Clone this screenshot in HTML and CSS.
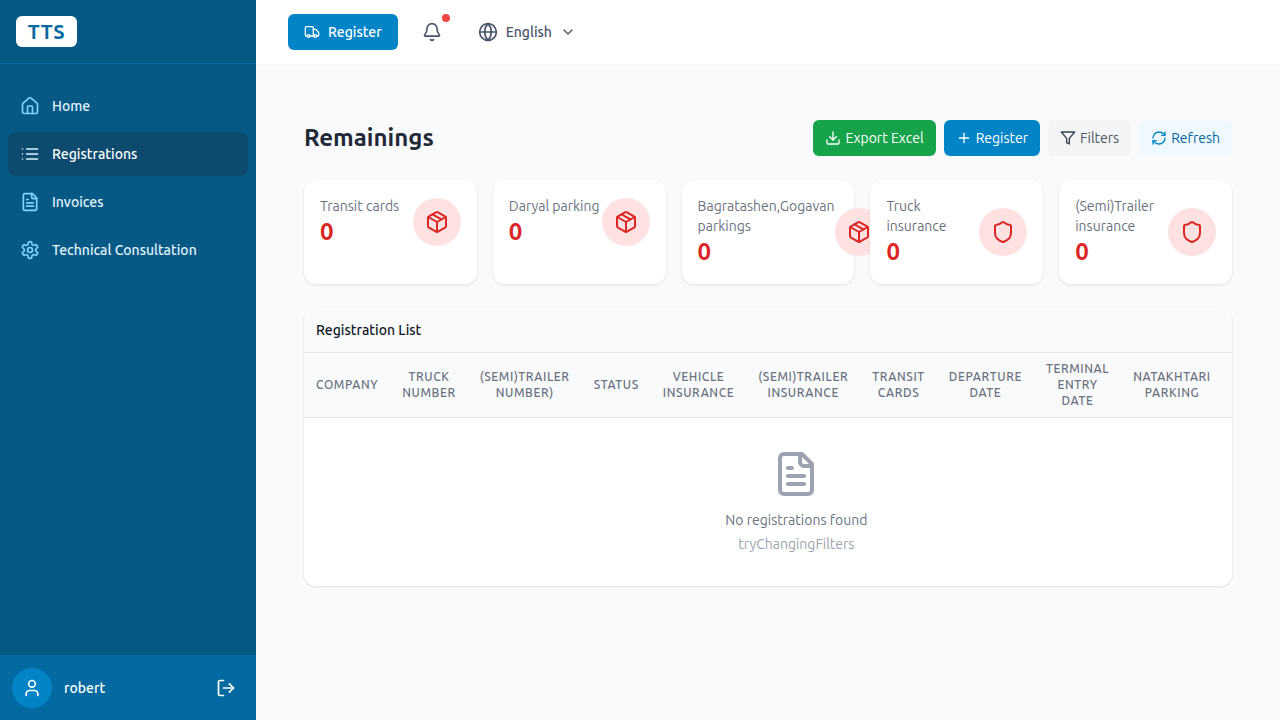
FILE: index.html
```html
<!DOCTYPE html>
<html lang="en">
<head>
    <meta charset="UTF-8">
    <meta name="viewport" content="width=device-width, initial-scale=1.0">
    <title>Remainings</title>
    <link rel="stylesheet" href="styles.css">
</head>
<body>
    <aside class="sidebar">
        <div class="brand"><span class="logo">TTS</span></div>
        <nav class="nav">
            <a class="nav-item">
                <svg class="icon icon-20" viewBox="0 0 24 24"><path d="M15 21v-8a1 1 0 0 0-1-1h-4a1 1 0 0 0-1 1v8"/><path d="M3 10a2 2 0 0 1 .709-1.528l7-5.999a2 2 0 0 1 2.582 0l7 5.999A2 2 0 0 1 21 10v9a2 2 0 0 1-2 2H5a2 2 0 0 1-2-2z"/></svg>
                Home
            </a>
            <a class="nav-item active">
                <svg class="icon icon-20" viewBox="0 0 24 24"><path d="M3 12h.01"/><path d="M3 18h.01"/><path d="M3 6h.01"/><path d="M8 12h13"/><path d="M8 18h13"/><path d="M8 6h13"/></svg>
                Registrations
            </a>
            <a class="nav-item">
                <svg class="icon icon-20" viewBox="0 0 24 24"><path d="M15 2H6a2 2 0 0 0-2 2v16a2 2 0 0 0 2 2h12a2 2 0 0 0 2-2V7Z"/><path d="M14 2v4a2 2 0 0 0 2 2h4"/><path d="M10 9H8"/><path d="M16 13H8"/><path d="M16 17H8"/></svg>
                Invoices
            </a>
            <a class="nav-item">
                <svg class="icon icon-20" viewBox="0 0 24 24"><path d="M12.22 2h-.44a2 2 0 0 0-2 2v.18a2 2 0 0 1-1 1.73l-.43.25a2 2 0 0 1-2 0l-.15-.08a2 2 0 0 0-2.73.73l-.22.38a2 2 0 0 0 .73 2.73l.15.1a2 2 0 0 1 1 1.72v.51a2 2 0 0 1-1 1.74l-.15.09a2 2 0 0 0-.73 2.73l.22.38a2 2 0 0 0 2.73.73l.15-.08a2 2 0 0 1 2 0l.43.25a2 2 0 0 1 1 1.73V20a2 2 0 0 0 2 2h.44a2 2 0 0 0 2-2v-.18a2 2 0 0 1 1-1.73l.43-.25a2 2 0 0 1 2 0l.15.08a2 2 0 0 0 2.73-.73l.22-.39a2 2 0 0 0-.73-2.73l-.15-.08a2 2 0 0 1-1-1.74v-.5a2 2 0 0 1 1-1.74l.15-.09a2 2 0 0 0 .73-2.73l-.22-.38a2 2 0 0 0-2.73-.73l-.15.08a2 2 0 0 1-2 0l-.43-.25a2 2 0 0 1-1-1.73V4a2 2 0 0 0-2-2z"/><circle cx="12" cy="12" r="3"/></svg>
                Technical Consultation
            </a>
        </nav>
        <div class="user-bar">
            <span class="avatar">
                <svg class="icon icon-20" viewBox="0 0 24 24"><path d="M19 21v-2a4 4 0 0 0-4-4H9a4 4 0 0 0-4 4v2"/><circle cx="12" cy="7" r="4"/></svg>
            </span>
            <span class="user-name">robert</span>
            <svg class="icon icon-20 logout" viewBox="0 0 24 24"><path d="M9 21H5a2 2 0 0 1-2-2V5a2 2 0 0 1 2-2h4"/><polyline points="16 17 21 12 16 7"/><line x1="21" y1="12" x2="9" y2="12"/></svg>
        </div>
    </aside>

    <div class="content">
        <header class="topbar">
            <button class="btn btn-blue top-register">
                <svg class="icon icon-16" viewBox="0 0 24 24"><path d="M14 18V6a2 2 0 0 0-2-2H4a2 2 0 0 0-2 2v11a1 1 0 0 0 1 1h2"/><path d="M15 18H9"/><path d="M19 18h2a1 1 0 0 0 1-1v-3.65a1 1 0 0 0-.22-.624l-3.48-4.35A1 1 0 0 0 17.52 8H14"/><circle cx="17" cy="18" r="2"/><circle cx="7" cy="18" r="2"/></svg>
                Register
            </button>
            <span class="bell">
                <svg class="icon icon-20" viewBox="0 0 24 24"><path d="M10.268 21a2 2 0 0 0 3.464 0"/><path d="M3.262 15.326A1 1 0 0 0 4 17h16a1 1 0 0 0 .74-1.673C19.41 13.956 18 12.499 18 8A6 6 0 0 0 6 8c0 4.499-1.411 5.956-2.738 7.326"/></svg>
                <span class="bell-dot"></span>
            </span>
            <span class="lang">
                <svg class="icon icon-20" viewBox="0 0 24 24"><circle cx="12" cy="12" r="10"/><path d="M12 2a14.5 14.5 0 0 0 0 20 14.5 14.5 0 0 0 0-20"/><path d="M2 12h20"/></svg>
                English
                <svg class="icon icon-16 chevron" viewBox="0 0 24 24"><path d="m6 9 6 6 6-6"/></svg>
            </span>
        </header>

        <main class="main">
            <div class="page-head">
                <h1>Remainings</h1>
                <div class="actions">
                    <button class="btn btn-green">
                        <svg class="icon icon-16" viewBox="0 0 24 24"><path d="M21 15v4a2 2 0 0 1-2 2H5a2 2 0 0 1-2-2v-4"/><polyline points="7 10 12 15 17 10"/><line x1="12" y1="15" x2="12" y2="3"/></svg>
                        Export Excel
                    </button>
                    <button class="btn btn-blue">
                        <svg class="icon icon-16" viewBox="0 0 24 24"><path d="M5 12h14"/><path d="M12 5v14"/></svg>
                        Register
                    </button>
                    <button class="btn btn-gray">
                        <svg class="icon icon-16" viewBox="0 0 24 24"><polygon points="22 3 2 3 10 12.46 10 19 14 21 14 12.46 22 3"/></svg>
                        Filters
                    </button>
                    <button class="btn btn-light">
                        <svg class="icon icon-16" viewBox="0 0 24 24"><path d="M3 12a9 9 0 0 1 9-9 9.75 9.75 0 0 1 6.74 2.74L21 8"/><path d="M21 3v5h-5"/><path d="M21 12a9 9 0 0 1-9 9 9.75 9.75 0 0 1-6.74-2.74L3 16"/><path d="M8 16H3v5"/></svg>
                        Refresh
                    </button>
                </div>
            </div>

            <section class="stats">
                <div class="stat">
                    <div class="stat-row">
                        <div class="stat-text"><p class="stat-label">Transit cards</p><p class="stat-value">0</p></div>
                        <span class="stat-icon"><svg class="icon icon-24" viewBox="0 0 24 24"><path d="M11 21.73a2 2 0 0 0 2 0l7-4A2 2 0 0 0 21 16V8a2 2 0 0 0-1-1.73l-7-4a2 2 0 0 0-2 0l-7 4A2 2 0 0 0 3 8v8a2 2 0 0 0 1 1.73z"/><path d="M12 22V12"/><polyline points="3.29 7 12 12 20.71 7"/><path d="m7.5 4.27 9 5.15"/></svg></span>
                    </div>
                </div>
                <div class="stat">
                    <div class="stat-row">
                        <div class="stat-text"><p class="stat-label">Daryal parking</p><p class="stat-value">0</p></div>
                        <span class="stat-icon"><svg class="icon icon-24" viewBox="0 0 24 24"><path d="M11 21.73a2 2 0 0 0 2 0l7-4A2 2 0 0 0 21 16V8a2 2 0 0 0-1-1.73l-7-4a2 2 0 0 0-2 0l-7 4A2 2 0 0 0 3 8v8a2 2 0 0 0 1 1.73z"/><path d="M12 22V12"/><polyline points="3.29 7 12 12 20.71 7"/><path d="m7.5 4.27 9 5.15"/></svg></span>
                    </div>
                </div>
                <div class="stat">
                    <div class="stat-row">
                        <div class="stat-text"><p class="stat-label">Bagratashen,Gogavan parkings</p><p class="stat-value">0</p></div>
                        <span class="stat-icon"><svg class="icon icon-24" viewBox="0 0 24 24"><path d="M11 21.73a2 2 0 0 0 2 0l7-4A2 2 0 0 0 21 16V8a2 2 0 0 0-1-1.73l-7-4a2 2 0 0 0-2 0l-7 4A2 2 0 0 0 3 8v8a2 2 0 0 0 1 1.73z"/><path d="M12 22V12"/><polyline points="3.29 7 12 12 20.71 7"/><path d="m7.5 4.27 9 5.15"/></svg></span>
                    </div>
                </div>
                <div class="stat">
                    <div class="stat-row">
                        <div class="stat-text"><p class="stat-label">Truck insurance</p><p class="stat-value">0</p></div>
                        <span class="stat-icon"><svg class="icon icon-24" viewBox="0 0 24 24"><path d="M20 13c0 5-3.5 7.5-7.66 8.95a1 1 0 0 1-.67-.01C7.5 20.5 4 18 4 13V6a1 1 0 0 1 1-1c2 0 4.5-1.2 6.24-2.72a1.17 1.17 0 0 1 1.52 0C14.51 3.81 17 5 19 5a1 1 0 0 1 1 1z"/></svg></span>
                    </div>
                </div>
                <div class="stat">
                    <div class="stat-row">
                        <div class="stat-text"><p class="stat-label">(Semi)Trailer insurance</p><p class="stat-value">0</p></div>
                        <span class="stat-icon"><svg class="icon icon-24" viewBox="0 0 24 24"><path d="M20 13c0 5-3.5 7.5-7.66 8.95a1 1 0 0 1-.67-.01C7.5 20.5 4 18 4 13V6a1 1 0 0 1 1-1c2 0 4.5-1.2 6.24-2.72a1.17 1.17 0 0 1 1.52 0C14.51 3.81 17 5 19 5a1 1 0 0 1 1 1z"/></svg></span>
                    </div>
                </div>
            </section>

            <section class="list-card">
                <div class="list-title">Registration List</div>
                <table class="list-table">
                    <thead>
                        <tr>
                            <th class="left">Company</th>
                            <th>Truck Number</th>
                            <th>(Semi)Trailer Number)</th>
                            <th>Status</th>
                            <th>Vehicle Insurance</th>
                            <th>(Semi)Trailer Insurance</th>
                            <th>Transit Cards</th>
                            <th>Departure Date</th>
                            <th>Terminal Entry Date</th>
                            <th>Natakhtari Parking</th>
                            <th class="col-rest"></th>
                        </tr>
                    </thead>
                    <tbody>
                        <tr>
                            <td colspan="11">
                                <div class="empty">
                                    <svg class="icon empty-icon" viewBox="0 0 24 24"><path d="M15 2H6a2 2 0 0 0-2 2v16a2 2 0 0 0 2 2h12a2 2 0 0 0 2-2V7Z"/><path d="M14 2v4a2 2 0 0 0 2 2h4"/><path d="M10 9H8"/><path d="M16 13H8"/><path d="M16 17H8"/></svg>
                                    <p class="empty-title">No registrations found</p>
                                    <p class="empty-hint">tryChangingFilters</p>
                                </div>
                            </td>
                        </tr>
                    </tbody>
                </table>
            </section>
        </main>
    </div>
</body>
</html>
```

FILE: styles.css
```css
* {
    box-sizing: border-box;
}
body {
    margin: 0;
    height: 720px;
    display: flex;
    overflow: hidden;
    font-family: Ubuntu, "Noto Sans", "Open Sans", sans-serif;
    font-size: 14px;
    line-height: 20px;
    background-color: #f9fafb;
    color: #111827;
}
p, h1 {
    margin: 0;
}
.icon {
    fill: none;
    stroke: currentColor;
    stroke-width: 2;
    stroke-linecap: round;
    stroke-linejoin: round;
    flex-shrink: 0;
}
.icon-16 {
    width: 16px;
    height: 16px;
}
.icon-20 {
    width: 20px;
    height: 20px;
}
.icon-24 {
    width: 24px;
    height: 24px;
}

/* sidebar */
.sidebar {
    width: 256px;
    flex-shrink: 0;
    display: flex;
    flex-direction: column;
    background-color: #075985;
    color: #e0f2fe;
}
.brand {
    height: 64px;
    padding: 16px;
    border-bottom: 1px solid #0369a1;
}
.logo {
    display: inline-block;
    width: 61px;
    height: 31px;
    background: white;
    border-radius: 6px;
    color: #0369a1;
    font-size: 20px;
    font-weight: 700;
    line-height: 31px;
    letter-spacing: 0.5px;
    text-align: center;
}
.nav {
    flex: 1;
    padding: 20px 8px;
    display: flex;
    flex-direction: column;
    gap: 4px;
}
.nav-item {
    height: 44px;
    padding: 0 12px;
    display: flex;
    align-items: center;
    gap: 12px;
    border-radius: 8px;
    font-weight: 500;
}
.nav-item .icon {
    color: #7dd3fc;
}
.nav-item.active {
    background-color: #0c4a6e;
    color: white;
}
.nav-item.active .icon {
    color: #e0f2fe;
}
.user-bar {
    height: 65px;
    padding: 0 20px 0 12px;
    display: flex;
    align-items: center;
    gap: 12px;
    background-color: #0369a1;
    color: white;
}
.avatar {
    width: 40px;
    height: 40px;
    border-radius: 50%;
    background-color: #0284c7;
    display: flex;
    align-items: center;
    justify-content: center;
}
.user-name {
    flex: 1;
    font-weight: 500;
}

/* top bar */
.content {
    flex: 1;
    min-width: 0;
}
.topbar {
    height: 65px;
    padding: 0 32px;
    display: flex;
    align-items: center;
    background: white;
    border-bottom: 1px solid #f3f4f6;
}
.btn {
    height: 36px;
    padding: 0 12px;
    display: inline-flex;
    align-items: center;
    gap: 4px;
    border: none;
    border-radius: 6px;
    font-family: inherit;
    font-size: 14px;
    font-weight: 400;
}
.btn-blue {
    background-color: #0284c7;
    color: white;
}
.btn-green {
    background-color: #16a34a;
    color: white;
}
.btn-gray {
    background-color: #f3f4f6;
    color: #4b5563;
}
.btn-gray .icon {
    color: #374151;
}
.btn-light {
    background-color: #f0f9ff;
    color: #0369a1;
}
.btn-light .icon {
    color: #0284c7;
}
.top-register {
    padding: 0 16px;
    gap: 8px;
    font-weight: 500;
}
.bell {
    position: relative;
    margin-left: 24px;
    width: 20px;
    height: 20px;
    color: #475569;
}
.bell-dot {
    position: absolute;
    top: -8px;
    right: -8px;
    width: 8px;
    height: 8px;
    border-radius: 50%;
    background-color: #ef4444;
}
.lang {
    margin-left: 36px;
    display: flex;
    align-items: center;
    gap: 8px;
    color: #475569;
    font-weight: 500;
}

/* page */
.main {
    padding: 55px 48px;
}
.page-head {
    display: flex;
    align-items: center;
    justify-content: space-between;
}
h1 {
    font-size: 24px;
    line-height: 32px;
    font-weight: 700;
    color: #1f2937;
}
.actions {
    display: flex;
    gap: 8px;
}
.stats {
    margin-top: 24px;
    display: grid;
    grid-template-columns: repeat(5, minmax(0, 1fr));
    gap: 16px;
}
.stat {
    padding: 16px;
    background: white;
    border-radius: 12px;
    box-shadow: 0 1px 3px rgba(0, 0, 0, 0.1);
}
.stat-row {
    display: flex;
    align-items: center;
    justify-content: space-between;
}
.stat-label {
    color: #6b7280;
}
.stat-value {
    font-size: 24px;
    line-height: 32px;
    font-weight: 700;
    color: #dc2626;
}
.stat-icon {
    width: 48px;
    height: 48px;
    flex-shrink: 0;
    display: flex;
    align-items: center;
    justify-content: center;
    border-radius: 50%;
    background-color: #fee2e2;
    color: #dc2626;
}

/* list */
.list-card {
    margin-top: 24px;
    background: white;
    border-radius: 12px;
    box-shadow: 0 1px 3px rgba(0, 0, 0, 0.1);
    overflow: hidden;
}
.list-title {
    height: 45px;
    padding: 12px;
    background-color: #f9fafb;
    border-bottom: 1px solid #e5e7eb;
    font-weight: 500;
    line-height: 20px;
}
.list-table {
    width: min-content;
    border-collapse: collapse;
}
.list-table th {
    padding: 8px 12px;
    background-color: #f9fafb;
    border-bottom: 1px solid #e5e7eb;
    font-size: 12px;
    line-height: 16px;
    font-weight: 500;
    letter-spacing: 0.05em;
    text-transform: uppercase;
    text-align: center;
    color: #6b7280;
}
.list-table th.left {
    text-align: left;
}
.list-table th.col-rest {
    padding-left: 54px;
}
.list-table td {
    padding: 0;
}
.empty {
    padding: 32px;
    display: flex;
    flex-direction: column;
    align-items: center;
}
.empty-icon {
    width: 48px;
    height: 48px;
    color: #9ca3af;
}
.empty-title {
    margin-top: 12px;
    color: #6b7280;
}
.empty-hint {
    margin-top: 4px;
    color: #9ca3af;
}
```
